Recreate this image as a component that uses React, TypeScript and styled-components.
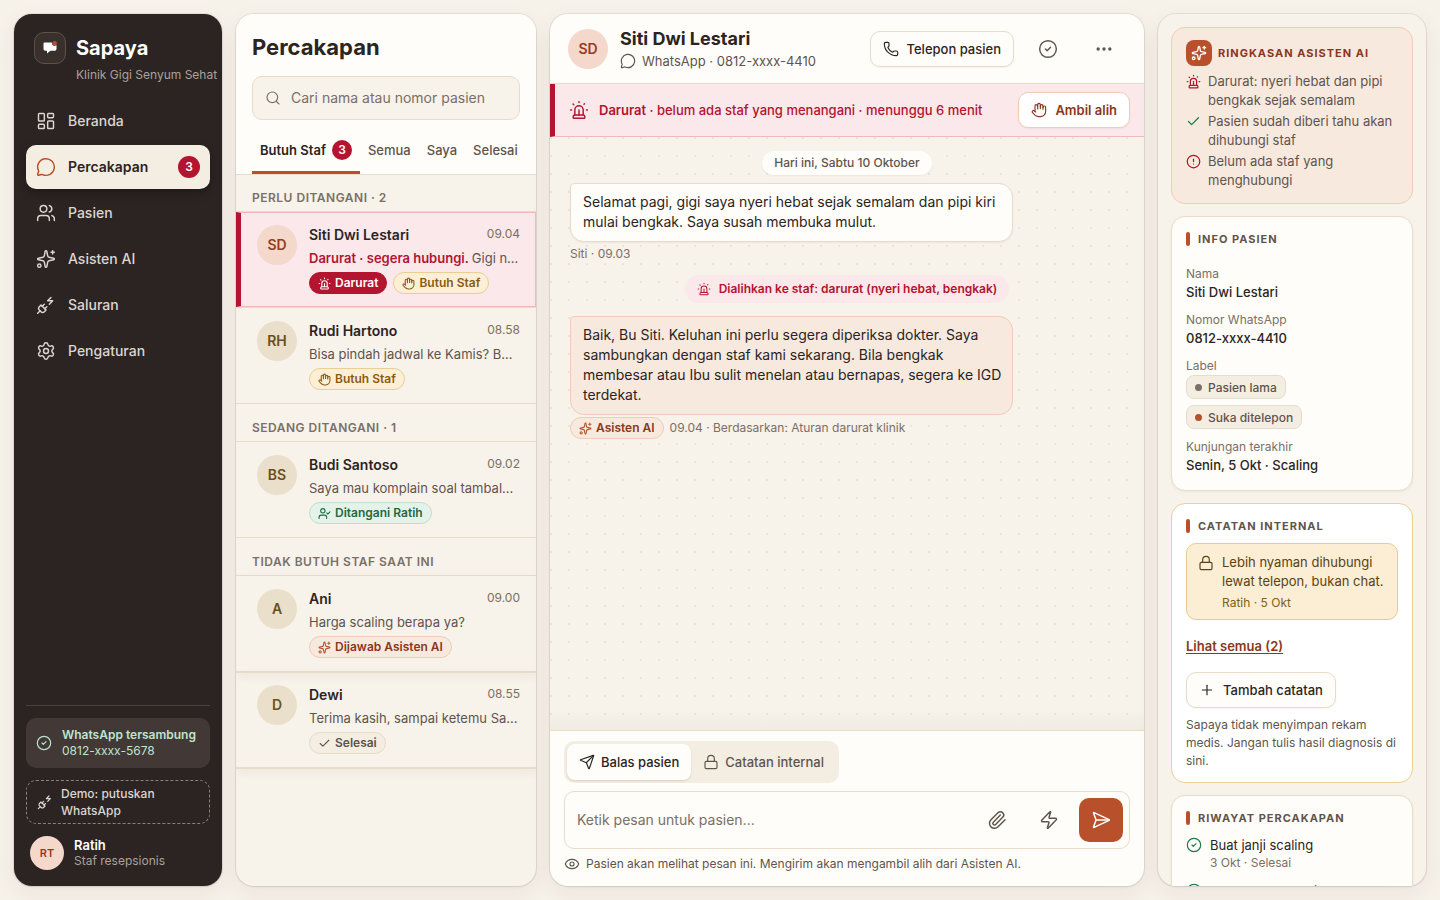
import React from 'react';
import styled, { createGlobalStyle, css } from 'styled-components';
import {
  Check, CircleAlert, CircleCheck, Ellipsis, Eye, Hand, LayoutDashboard, Lock,
  MessageCircle, Paperclip, Phone, PlugZap, Plus, Search, Send, SendHorizontal, Settings, Siren,
  Sparkles, UserCheck, Users, Zap,
} from 'lucide-react';

const c = {
  ink: '#2b2422',
  soft: '#5f544d',
  mute: '#7b6f66',
  line: '#e6dcc8',
  paper: '#fffdf9',
  cream: '#f7f2ea',
  sand: '#f4ede2',
  rust: '#b8502c',
  rustDark: '#8a371c',
  peach: '#f8e9de',
  peachLine: '#efccb5',
  red: '#b3142f',
  redSoft: '#fae8eb',
  redLine: '#f0b8c2',
  green: '#1f7a4a',
};

const GlobalStyle = createGlobalStyle`
  *, *::before, *::after { box-sizing: border-box; }
  body {
    margin: 0;
    background: #f6f1e9;
    color: ${c.ink};
    font: 400 13px/20px Inter, "Liberation Sans", sans-serif;
  }
  button, input { font: inherit; color: inherit; }
  button { cursor: pointer; }
  h1, h2, h3, p, ul, dl, dd { margin: 0; padding: 0; }
  ul { list-style: none; }
  svg { flex: none; display: block; }
`;

const Shell = styled.div`
  display: grid;
  grid-template-columns: 208px 300px minmax(0, 1fr) 268px;
  gap: 14px;
  height: 100vh;
  padding: 14px;
`;

const panel = css`
  min-height: 0;
  border-radius: 18px;
  overflow: hidden;
  box-shadow: 0 0 0 1px rgba(80, 60, 40, 0.09), 0 1px 2px rgba(60, 40, 30, 0.08), 0 8px 24px rgba(60, 40, 30, 0.06);
`;

/* Sidebar */
const Sidebar = styled.aside`
  ${panel}
  display: flex;
  flex-direction: column;
  padding: 18px 12px 16px;
  background: ${c.ink};
  color: #dcd6d1;
`;
const Brand = styled.div`
  display: grid;
  grid-template-columns: 32px 1fr;
  column-gap: 10px;
  align-items: center;
  padding-left: 8px;
  margin-bottom: 13px;
`;
const LogoBox = styled.span`
  display: grid;
  place-items: center;
  width: 32px;
  height: 32px;
  border: 1px solid #5d534d;
  border-radius: 10px;
  background: #3a302b;
`;
const BrandName = styled.strong`
  font-size: 20px;
  line-height: 32px;
  font-weight: 700;
  color: #fff;
`;
const BrandSub = styled.span`
  grid-column: 2;
  font-size: 12px;
  line-height: 22px;
  white-space: nowrap;
  color: #aaa29c;
`;
const Nav = styled.nav`
  display: flex;
  flex-direction: column;
  gap: 2px;
`;
const NavLink = styled.a<{ $active?: boolean }>`
  display: flex;
  align-items: center;
  gap: 12px;
  height: 44px;
  padding: 0 10px;
  border-radius: 10px;
  font-size: 14px;
  font-weight: ${p => (p.$active ? 600 : 500)};
  color: ${p => (p.$active ? c.ink : 'inherit')};
  background: ${p => (p.$active ? '#f4ede2' : 'transparent')};
  box-shadow: ${p => (p.$active ? '0 4px 10px rgba(0, 0, 0, 0.3)' : 'none')};
  text-decoration: none;
  & > svg { color: ${p => (p.$active ? c.rust : 'inherit')}; }
`;
const Count = styled.span<{ $size: number }>`
  display: inline-grid;
  place-items: center;
  width: ${p => p.$size}px;
  height: ${p => p.$size}px;
  border-radius: 50%;
  background: ${c.red};
  color: #fff;
  font-size: 12px;
  font-weight: 600;
  ${NavLink} & { margin-left: auto; }
`;
const SideFoot = styled.div`
  display: flex;
  flex-direction: column;
  gap: 12px;
  margin-top: auto;
  padding-top: 12px;
  border-top: 1px solid #4a413d;
`;
const Connection = styled.div`
  display: flex;
  align-items: center;
  gap: 10px;
  height: 50px;
  padding-left: 10px;
  border-radius: 10px;
  background: #423936;
  color: #bfe3cf;
  font-size: 12px;
  line-height: 16px;
  white-space: nowrap;
  strong { display: block; font-weight: 600; }
`;
const DemoButton = styled.button`
  display: flex;
  align-items: center;
  gap: 8px;
  height: 44px;
  padding: 0 10px;
  border: 1px dashed #8a817b;
  border-radius: 10px;
  background: none;
  font-size: 12px;
  font-weight: 500;
  line-height: 17px;
  text-align: left;
`;
const Profile = styled.div`
  display: flex;
  align-items: center;
  gap: 10px;
  padding-left: 4px;
  font-size: 12px;
  line-height: 16px;
  color: #aaa29c;
  strong { display: block; font-size: 13px; font-weight: 600; color: #fff; }
`;
const Avatar = styled.span<{ $tone?: 'rose' | 'sand'; $size?: number }>`
  display: grid;
  place-items: center;
  flex: none;
  width: ${p => p.$size ?? 40}px;
  height: ${p => p.$size ?? 40}px;
  border-radius: 50%;
  font-size: ${p => (p.$size ? 11 : 14)}px;
  font-weight: 600;
  background: ${p => (p.$tone === 'rose' ? '#f3d8cb' : '#e9dfca')};
  color: ${p => (p.$tone === 'rose' ? '#983a1d' : '#6b4f16')};
`;

/* Conversation list */
const ListPanel = styled.section`
  ${panel}
  display: flex;
  flex-direction: column;
  background: ${c.cream};
`;
const ListHead = styled.header`
  padding: 18px 16px 0;
  background: ${c.paper};
  border-bottom: 1px solid ${c.line};
`;
const PageTitle = styled.h1`
  font-size: 22px;
  line-height: 30px;
  font-weight: 700;
  margin-bottom: 14px;
`;
const SearchField = styled.label`
  display: flex;
  align-items: center;
  gap: 10px;
  height: 44px;
  padding: 0 12px;
  border: 1px solid ${c.line};
  border-radius: 10px;
  background: ${c.cream};
  color: ${c.mute};
  input {
    flex: 1;
    min-width: 0;
    padding: 0;
    border: 0;
    outline: 0;
    background: none;
    font-size: 14px;
  }
  input::placeholder { color: ${c.mute}; opacity: 1; }
`;
const Tabs = styled.div`
  display: flex;
  margin-top: 8px;
`;
const Tab = styled.button<{ $active?: boolean }>`
  display: flex;
  align-items: center;
  gap: 6px;
  height: 46px;
  padding: 0 8px;
  border: 0;
  border-bottom: 3px solid ${p => (p.$active ? c.rust : 'transparent')};
  background: none;
  font-size: 13px;
  font-weight: ${p => (p.$active ? 600 : 500)};
  color: ${p => (p.$active ? c.ink : c.soft)};
  white-space: nowrap;
`;
const Group = styled.section`
  padding-bottom: 1px;
`;
const GroupLabel = styled.h2`
  height: 37px;
  padding: 14px 16px 0;
  border-bottom: 1px solid ${c.line};
  font-size: 12px;
  line-height: 18px;
  font-weight: 600;
  letter-spacing: 0.5px;
  text-transform: uppercase;
  color: ${c.mute};
`;
const ChatItem = styled.li<{ $raised?: boolean }>`
  border-bottom: 1px solid ${c.line};
  box-shadow: ${p => (p.$raised ? `0 1px 0 ${c.line}, 0 4px 10px rgba(90, 70, 20, 0.06)` : 'none')};
`;
const ChatButton = styled.button<{ $active?: boolean }>`
  display: flex;
  gap: 12px;
  width: 100%;
  height: 95px;
  padding: 12px 15px 12px 16px;
  border: 1px solid ${p => (p.$active ? c.redLine : 'transparent')};
  border-left: 5px solid ${p => (p.$active ? c.red : 'transparent')};
  background: ${p => (p.$active ? c.redSoft : 'transparent')};
  text-align: left;
`;
const ChatBody = styled.span`
  flex: 1;
  min-width: 0;
`;
const ChatTop = styled.span`
  display: flex;
  justify-content: space-between;
  line-height: 20px;
  strong { font-size: 14px; font-weight: 600; }
  time { font-size: 12px; line-height: 18px; color: ${c.mute}; }
`;
const Preview = styled.span`
  display: block;
  margin: 3px 0 4px;
  overflow: hidden;
  text-overflow: ellipsis;
  white-space: nowrap;
  color: ${c.soft};
  b { font-weight: 600; color: ${c.red}; }
`;
const ChipRow = styled.span`
  display: flex;
  gap: 6px;
`;
type Tone = 'alarm' | 'amber' | 'green' | 'peach' | 'plain';
const chipTones: Record<Tone, [string, string, string]> = {
  alarm: [c.red, c.red, '#fff'],
  amber: ['#fcefd6', '#e9cf94', '#8a5a12'],
  green: ['#e5f2e9', '#bfe0cc', '#1b6b40'],
  peach: [c.peach, c.peachLine, c.rustDark],
  plain: [c.sand, c.line, c.soft],
};
const Chip = styled.span<{ $tone: Tone }>`
  display: inline-flex;
  align-items: center;
  gap: 4px;
  height: 22px;
  padding: 0 8px;
  border: 1px solid ${p => chipTones[p.$tone][1]};
  border-radius: 11px;
  background: ${p => chipTones[p.$tone][0]};
  color: ${p => chipTones[p.$tone][2]};
  font-size: 12px;
  font-weight: 600;
  white-space: nowrap;
  & > svg { color: ${p => (p.$tone === 'peach' ? c.rust : 'inherit')}; }
`;

/* Conversation */
const Conversation = styled.main`
  ${panel}
  display: flex;
  flex-direction: column;
  background: ${c.paper};
`;
const ConvHead = styled.header`
  display: flex;
  align-items: center;
  gap: 12px;
  height: 70px;
  padding: 0 18px;
  border-bottom: 1px solid ${c.line};
`;
const ConvTitle = styled.div`
  flex: 1;
  h2 { font-size: 18px; line-height: 24px; font-weight: 700; }
  p { display: flex; align-items: center; gap: 6px; color: ${c.soft}; }
`;
const OutlineButton = styled.button<{ $rust?: boolean }>`
  display: inline-flex;
  align-items: center;
  gap: 8px;
  height: 36px;
  padding: 0 12px;
  border: 1px solid ${p => (p.$rust ? c.peachLine : c.line)};
  border-radius: 10px;
  background: ${p => (p.$rust ? '#fff' : c.paper)};
  box-shadow: 0 1px 2px rgba(60, 40, 30, 0.05);
  color: ${p => (p.$rust ? c.rustDark : c.ink)};
  font-weight: ${p => (p.$rust ? 600 : 500)};
  white-space: nowrap;
`;
const IconButton = styled.button`
  display: grid;
  place-items: center;
  width: 44px;
  height: 44px;
  padding: 0;
  border: 0;
  border-radius: 10px;
  background: none;
  color: ${c.soft};
`;
const Banner = styled.div`
  display: flex;
  align-items: center;
  gap: 10px;
  height: 53px;
  padding: 0 14px;
  border-left: 5px solid ${c.red};
  border-bottom: 1px solid ${c.redLine};
  background: ${c.redSoft};
  color: ${c.red};
  font-weight: 500;
  p { flex: 1; }
  b { font-weight: 600; }
`;
const Thread = styled.div`
  flex: 1;
  min-height: 0;
  overflow: hidden;
  display: flex;
  flex-direction: column;
  align-items: flex-start;
  padding: 14px 20px;
  background:
    linear-gradient(to top, rgba(90, 70, 30, 0.04), transparent 20px),
    radial-gradient(circle at 1px 1px, #ebe4db 1px, transparent 0) 0 0 / 18px 18px,
    ${c.cream};
`;
const DayChip = styled.p`
  align-self: center;
  padding: 2px 12px;
  border-radius: 12px;
  background: ${c.paper};
  box-shadow: 0 1px 2px rgba(60, 40, 30, 0.06);
  font-size: 12px;
  font-weight: 500;
  color: ${c.soft};
`;
const Bubble = styled.p<{ $ai?: boolean }>`
  width: 80%;
  padding: 8px 8px 9px 12px;
  border: 1px solid ${p => (p.$ai ? c.peachLine : c.line)};
  border-radius: 4px 14px 14px 14px;
  background: ${p => (p.$ai ? c.peach : c.paper)};
  box-shadow: ${p => (p.$ai ? 'none' : '0 1px 2px rgba(60, 40, 30, 0.06)')};
  margin-top: ${p => (p.$ai ? 13 : 8)}px;
  font-size: 14px;
`;
const Meta = styled.div`
  display: flex;
  align-items: center;
  gap: 6px;
  margin-top: 2px;
  font-size: 12px;
  color: ${c.mute};
`;
const EventChip = styled.p`
  align-self: center;
  display: flex;
  align-items: center;
  gap: 8px;
  height: 28px;
  margin-top: 11px;
  padding: 0 12px;
  border-radius: 14px;
  background: ${c.redSoft};
  color: ${c.red};
  font-size: 12px;
  font-weight: 600;
`;
const Composer = styled.form`
  padding: 10px 14px 12px;
  border-top: 1px solid ${c.line};
`;
const ModeSwitch = styled.div`
  display: flex;
  width: fit-content;
  padding: 3px;
  border-radius: 10px;
  background: ${c.sand};
`;
const Mode = styled.button<{ $active?: boolean }>`
  display: inline-flex;
  align-items: center;
  gap: 6px;
  height: 36px;
  padding: 0 12px;
  border: 0;
  border-radius: 8px;
  background: ${p => (p.$active ? c.paper : 'none')};
  box-shadow: ${p => (p.$active ? '0 1px 2px rgba(60, 40, 30, 0.14)' : 'none')};
  color: ${p => (p.$active ? c.ink : c.soft)};
  font-weight: 500;
`;
const InputRow = styled.div`
  display: flex;
  align-items: center;
  gap: 8px;
  height: 58px;
  margin-top: 8px;
  padding: 0 6px 0 12px;
  border: 1px solid ${c.line};
  border-radius: 10px;
  background: ${c.paper};
  input {
    flex: 1;
    min-width: 0;
    padding: 0;
    border: 0;
    outline: 0;
    background: none;
    font-size: 14px;
  }
  input::placeholder { color: ${c.mute}; opacity: 1; }
`;
const SendButton = styled(IconButton)`
  background: ${c.rust};
  color: #fff;
`;
const Hint = styled.p`
  display: flex;
  align-items: center;
  gap: 6px;
  margin-top: 5px;
  font-size: 12px;
  color: ${c.soft};
`;

/* Details */
const Details = styled.aside`
  ${panel}
  display: flex;
  flex-direction: column;
  gap: 12px;
  padding: 13px;
  background: ${c.cream};
`;
const cardLooks = {
  plain: { padding: '13px 14px', line: c.line, fill: c.paper },
  ai: { padding: '12px 14px 13px', line: c.peachLine, fill: c.peach },
  note: { padding: '13px 14px 12px', line: '#ebd091', fill: '#fff' },
};
const Card = styled.section<{ $variant?: keyof typeof cardLooks }>`
  flex: none;
  padding: ${p => cardLooks[p.$variant ?? 'plain'].padding};
  border: 1px solid ${p => cardLooks[p.$variant ?? 'plain'].line};
  border-radius: 14px;
  background: ${p => cardLooks[p.$variant ?? 'plain'].fill};
  box-shadow: ${p => (p.$variant ? 'none' : '0 1px 3px rgba(60, 40, 30, 0.05)')};
`;
const CardTitle = styled.h3<{ $ai?: boolean }>`
  display: flex;
  align-items: center;
  gap: ${p => (p.$ai ? 6 : 8)}px;
  font-size: 11px;
  line-height: 18px;
  font-weight: 700;
  letter-spacing: 1px;
  text-transform: uppercase;
  white-space: nowrap;
  color: ${p => (p.$ai ? c.rustDark : c.soft)};
`;
const TitleBar = styled.i`
  width: 4px;
  height: 14px;
  border-radius: 2px;
  background: ${c.rust};
`;
const TitleIcon = styled.span`
  display: grid;
  place-items: center;
  width: 26px;
  height: 26px;
  border-radius: 8px;
  background: ${c.rust};
  color: #fff;
`;
const Summary = styled.ul`
  display: flex;
  flex-direction: column;
  gap: 2px;
  margin-top: 6px;
  li { display: flex; gap: 7px; line-height: 19px; color: ${c.soft}; }
  svg { margin-top: 2px; }
`;
const Facts = styled.dl`
  display: flex;
  flex-direction: column;
  gap: 8px;
  margin: 16px 0 2px;
  line-height: 19px;
  dt { font-size: 12px; color: ${c.mute}; }
  dd { font-weight: 500; }
`;
const Tags = styled.dd`
  display: flex;
  flex-direction: column;
  align-items: flex-start;
  gap: 6px;
`;
const Tag = styled.span<{ $dot: string }>`
  display: inline-flex;
  align-items: center;
  gap: 6px;
  height: 24px;
  padding: 0 8px;
  border: 1px solid ${c.line};
  border-radius: 8px;
  background: ${c.sand};
  font-size: 12px;
  color: ${c.soft};
  &::before {
    content: '';
    width: 7px;
    height: 7px;
    border-radius: 50%;
    background: ${p => p.$dot};
  }
`;
const Note = styled.div`
  display: flex;
  gap: 8px;
  margin-top: 8px;
  padding: 9px 11px 7px;
  border: 1px solid #e8cd92;
  border-radius: 10px;
  background: #fbeed5;
  line-height: 19px;
  color: #5a4310;
  svg { margin-top: 2px; }
  small { display: block; margin-top: 2px; font-size: 12px; color: #806214; }
`;
const NoteLink = styled.a`
  display: flex;
  align-items: center;
  height: 44px;
  margin: 4px 0;
  font-weight: 600;
  color: ${c.rustDark};
  text-decoration: underline;
  text-underline-offset: 2px;
`;
const Disclaimer = styled.p`
  margin-top: 8px;
  font-size: 12px;
  line-height: 18px;
  color: ${c.soft};
`;
const History = styled.ul`
  display: flex;
  flex-direction: column;
  gap: 10px;
  margin-top: 8px;
  li { display: flex; gap: 8px; line-height: 20px; }
  svg { margin-top: 2px; color: ${c.green}; }
  small { display: block; font-size: 12px; line-height: 16px; color: ${c.mute}; }
`;

const sw = 1.75;

const Logo = () => (
  <svg width="18" height="18" viewBox="0 0 18 18" aria-hidden="true">
    <path
      d="M3.5 3.5h7.3a2.9 2.9 0 0 0 4.7 2.6V10a1.7 1.7 0 0 1-1.7 1.7H9.4L6 14.6v-2.9H4.2A1.7 1.7 0 0 1 2.5 10V4.5a1 1 0 0 1 1-1z"
      fill="#fff"
    />
    <circle cx="13.6" cy="4.2" r="2.3" fill={c.rust} />
  </svg>
);

const navItems = [
  { label: 'Beranda', Icon: LayoutDashboard },
  { label: 'Percakapan', Icon: MessageCircle, count: 3 },
  { label: 'Pasien', Icon: Users },
  { label: 'Asisten AI', Icon: Sparkles },
  { label: 'Saluran', Icon: PlugZap },
  { label: 'Pengaturan', Icon: Settings },
];

type Chat = {
  initials: string;
  name: string;
  time: string;
  urgent?: string;
  text: string;
  chips: { tone: Tone; label: string; Icon: React.ElementType }[];
  active?: boolean;
  raised?: boolean;
};

const staffChip = { tone: 'amber' as Tone, label: 'Butuh Staf', Icon: Hand };

const groups: { title: string; chats: Chat[] }[] = [
  {
    title: 'Perlu ditangani · 2',
    chats: [
      {
        initials: 'SD', name: 'Siti Dwi Lestari', time: '09.04', urgent: 'Darurat · segera hubungi.',
        text: 'Gigi nyeri hebat', active: true,
        chips: [{ tone: 'alarm', label: 'Darurat', Icon: Siren }, staffChip],
      },
      { initials: 'RH', name: 'Rudi Hartono', time: '08.58', text: 'Bisa pindah jadwal ke Kamis? Besok', chips: [staffChip] },
    ],
  },
  {
    title: 'Sedang ditangani · 1',
    chats: [
      {
        initials: 'BS', name: 'Budi Santoso', time: '09.02', text: 'Saya mau komplain soal tambalan kemarin',
        chips: [{ tone: 'green', label: 'Ditangani Ratih', Icon: UserCheck }],
      },
    ],
  },
  {
    title: 'Tidak butuh staf saat ini',
    chats: [
      {
        initials: 'A', name: 'Ani', time: '09.00', text: 'Harga scaling berapa ya?', raised: true,
        chips: [{ tone: 'peach', label: 'Dijawab Asisten AI', Icon: Sparkles }],
      },
      {
        initials: 'D', name: 'Dewi', time: '08.55', text: 'Terima kasih, sampai ketemu Sabtu', raised: true,
        chips: [{ tone: 'plain', label: 'Selesai', Icon: Check }],
      },
    ],
  },
];

export default function App() {
  return (
    <>
      <GlobalStyle />
      <Shell>
        <Sidebar>
          <Brand>
            <LogoBox><Logo /></LogoBox>
            <BrandName>Sapaya</BrandName>
            <BrandSub>Klinik Gigi Senyum Sehat</BrandSub>
          </Brand>
          <Nav>
            {navItems.map(({ label, Icon, count }) => (
              <NavLink key={label} href="#" $active={!!count}>
                <Icon size={20} strokeWidth={sw} />
                {label}
                {count && <Count $size={22}>{count}</Count>}
              </NavLink>
            ))}
          </Nav>
          <SideFoot>
            <Connection>
              <CircleCheck size={16} strokeWidth={sw} />
              <span><strong>WhatsApp tersambung</strong>0812-xxxx-5678</span>
            </Connection>
            <DemoButton type="button">
              <PlugZap size={16} strokeWidth={sw} />
              <span>Demo: putuskan WhatsApp</span>
            </DemoButton>
            <Profile>
              <Avatar $tone="rose" $size={34}>RT</Avatar>
              <span><strong>Ratih</strong>Staf resepsionis</span>
            </Profile>
          </SideFoot>
        </Sidebar>

        <ListPanel>
          <ListHead>
            <PageTitle>Percakapan</PageTitle>
            <SearchField>
              <Search size={16} strokeWidth={sw} />
              <input type="search" aria-label="Cari percakapan" placeholder="Cari nama atau nomor pasien" />
            </SearchField>
            <Tabs role="tablist">
              <Tab role="tab" aria-selected $active>Butuh Staf <Count $size={20}>3</Count></Tab>
              <Tab role="tab">Semua</Tab>
              <Tab role="tab">Saya</Tab>
              <Tab role="tab">Selesai</Tab>
            </Tabs>
          </ListHead>
          {groups.map(group => (
            <Group key={group.title}>
              <GroupLabel>{group.title}</GroupLabel>
              <ul>
                {group.chats.map(chat => (
                  <ChatItem key={chat.name} $raised={chat.raised}>
                    <ChatButton type="button" $active={chat.active}>
                      <Avatar $tone={chat.active ? 'rose' : 'sand'}>{chat.initials}</Avatar>
                      <ChatBody>
                        <ChatTop><strong>{chat.name}</strong><time>{chat.time}</time></ChatTop>
                        <Preview>{chat.urgent && <b>{chat.urgent} </b>}{chat.text}</Preview>
                        <ChipRow>
                          {chat.chips.map(({ tone, label, Icon }) => (
                            <Chip key={label} $tone={tone}><Icon size={13} strokeWidth={2} />{label}</Chip>
                          ))}
                        </ChipRow>
                      </ChatBody>
                    </ChatButton>
                  </ChatItem>
                ))}
              </ul>
            </Group>
          ))}
        </ListPanel>

        <Conversation>
          <ConvHead>
            <Avatar $tone="rose">SD</Avatar>
            <ConvTitle>
              <h2>Siti Dwi Lestari</h2>
              <p><MessageCircle size={16} strokeWidth={sw} />WhatsApp · 0812-xxxx-4410</p>
            </ConvTitle>
            <OutlineButton type="button"><Phone size={16} strokeWidth={sw} />Telepon pasien</OutlineButton>
            <IconButton type="button" aria-label="Tandai selesai"><CircleCheck size={20} strokeWidth={sw} /></IconButton>
            <IconButton type="button" aria-label="Lainnya"><Ellipsis size={20} strokeWidth={2} /></IconButton>
          </ConvHead>
          <Banner role="alert">
            <Siren size={20} strokeWidth={sw} />
            <p><b>Darurat</b> · belum ada staf yang menangani · menunggu 6 menit</p>
            <OutlineButton type="button" $rust><Hand size={16} strokeWidth={sw} />Ambil alih</OutlineButton>
          </Banner>
          <Thread>
            <DayChip>Hari ini, Sabtu 10 Oktober</DayChip>
            <Bubble>Selamat pagi, gigi saya nyeri hebat sejak semalam dan pipi kiri mulai bengkak. Saya susah membuka mulut.</Bubble>
            <Meta>Siti · 09.03</Meta>
            <EventChip><Siren size={14} strokeWidth={sw} />Dialihkan ke staf: darurat (nyeri hebat, bengkak)</EventChip>
            <Bubble $ai>
              Baik, Bu Siti. Keluhan ini perlu segera diperiksa dokter. Saya sambungkan dengan staf kami sekarang. Bila
              bengkak membesar atau Ibu sulit menelan atau bernapas, segera ke IGD terdekat.
            </Bubble>
            <Meta>
              <Chip $tone="peach"><Sparkles size={13} strokeWidth={2} />Asisten AI</Chip>
              09.04 · Berdasarkan: Aturan darurat klinik
            </Meta>
          </Thread>
          <Composer onSubmit={e => e.preventDefault()}>
            <ModeSwitch>
              <Mode type="button" $active><Send size={16} strokeWidth={sw} />Balas pasien</Mode>
              <Mode type="button"><Lock size={16} strokeWidth={sw} />Catatan internal</Mode>
            </ModeSwitch>
            <InputRow>
              <input aria-label="Pesan" placeholder="Ketik pesan untuk pasien..." />
              <IconButton type="button" aria-label="Lampirkan"><Paperclip size={20} strokeWidth={sw} /></IconButton>
              <IconButton type="button" aria-label="Balasan cepat"><Zap size={20} strokeWidth={sw} /></IconButton>
              <SendButton type="submit" aria-label="Kirim"><SendHorizontal size={20} strokeWidth={sw} /></SendButton>
            </InputRow>
            <Hint><Eye size={16} strokeWidth={sw} />Pasien akan melihat pesan ini. Mengirim akan mengambil alih dari Asisten AI.</Hint>
          </Composer>
        </Conversation>

        <Details>
          <Card $variant="ai">
            <CardTitle $ai><TitleIcon><Sparkles size={16} strokeWidth={2} /></TitleIcon>Ringkasan Asisten AI</CardTitle>
            <Summary>
              <li><Siren size={15} strokeWidth={2} color={c.red} />Darurat: nyeri hebat dan pipi bengkak sejak semalam</li>
              <li><Check size={15} strokeWidth={2} color={c.green} />Pasien sudah diberi tahu akan dihubungi staf</li>
              <li><CircleAlert size={15} strokeWidth={2} color={c.red} />Belum ada staf yang menghubungi</li>
            </Summary>
          </Card>
          <Card>
            <CardTitle><TitleBar />Info pasien</CardTitle>
            <Facts>
              <div><dt>Nama</dt><dd>Siti Dwi Lestari</dd></div>
              <div><dt>Nomor WhatsApp</dt><dd>0812-xxxx-4410</dd></div>
              <div>
                <dt>Label</dt>
                <Tags><Tag $dot="#7b6f66">Pasien lama</Tag><Tag $dot={c.rust}>Suka ditelepon</Tag></Tags>
              </div>
              <div><dt>Kunjungan terakhir</dt><dd>Senin, 5 Okt · Scaling</dd></div>
            </Facts>
          </Card>
          <Card $variant="note">
            <CardTitle><TitleBar />Catatan internal</CardTitle>
            <Note>
              <Lock size={16} strokeWidth={sw} />
              <p>Lebih nyaman dihubungi lewat telepon, bukan chat.<small>Ratih · 5 Okt</small></p>
            </Note>
            <NoteLink href="#">Lihat semua (2)</NoteLink>
            <OutlineButton type="button"><Plus size={16} strokeWidth={sw} />Tambah catatan</OutlineButton>
            <Disclaimer>Sapaya tidak menyimpan rekam medis. Jangan tulis hasil diagnosis di sini.</Disclaimer>
          </Card>
          <Card>
            <CardTitle><TitleBar />Riwayat percakapan</CardTitle>
            <History>
              <li><CircleCheck size={16} strokeWidth={sw} /><span>Buat janji scaling<small>3 Okt · Selesai</small></span></li>
              <li><CircleCheck size={16} strokeWidth={sw} /><span>Tanya harga scaling<small>1 Okt · Selesai</small></span></li>
            </History>
          </Card>
        </Details>
      </Shell>
    </>
  );
}
